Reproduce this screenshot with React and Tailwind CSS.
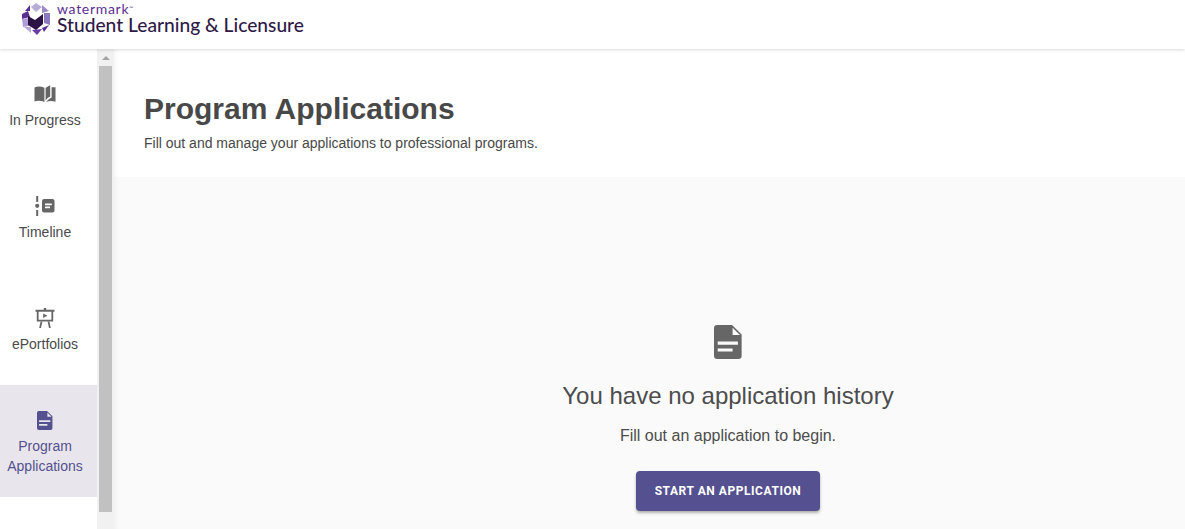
const sans = "font-['Liberation_Sans',Arial,sans-serif]";

function Logo() {
  return (
    <svg width="28" height="32" viewBox="0 0 28 32" className="shrink-0">
      <polygon points="14,0 20,4 14,9 9,4" fill="#b8acd9" />
      <polygon points="8,2 8,8 3,8" fill="#5b2f91" />
      <polygon points="20,2 27,8 20,10" fill="#9b8cc9" />
      <polygon points="0,11 6,8 8,14 0,16" fill="#5b2f91" />
      <polygon points="0,16 7,15 7,23 1,24" fill="#b09dd6" />
      <polygon points="22,10 28,10 28,22 22,20" fill="#8a79bd" />
      <polygon points="2,24 9,24 9,30" fill="#b8a8dc" />
      <polygon points="20,25 27,22 22,29" fill="#5b2f91" />
      <polygon points="10,27 20,26 15,32" fill="#6a3aa5" />
      <polygon points="6,13 13,17 21,11 21,21 14,27 6,22" fill="#2a1245" />
      <polygon points="13,10 19,9 13,16" fill="#ffffff" />
    </svg>
  );
}

function BookIcon() {
  return (
    <svg width="22" height="18" viewBox="0 0 22 18" fill="#666666">
      <path d="M0.5 2.5C3 1 7 1 10.4 2.8V17C7 15.4 3 15.4 0.5 16.6Z" />
      <path d="M11.6 3C12.8 2 14 1.2 16.2 0.2V11.5C14.4 12.4 13 13.6 11.6 15.4Z" />
      <path d="M17.6 2.2H21.5V16.8C18.5 15.6 15 15.6 12 17C14 15 16 13.6 17.6 12.6Z" />
    </svg>
  );
}

function TimelineIcon() {
  return (
    <svg width="20" height="20" viewBox="0 0 20 20" fill="#666666">
      <rect x="1.2" y="0" width="2" height="6" />
      <circle cx="2.2" cy="9.8" r="2.1" />
      <rect x="1.2" y="14" width="2" height="6" />
      <path fillRule="evenodd" d="M9 3H17.5A2 2 0 0 1 19.5 5V14.5A2 2 0 0 1 17.5 16.5H9A2 2 0 0 1 7 14.5V5A2 2 0 0 1 9 3ZM10 7.5V9.2H16.8V7.5ZM10 10.6V12.3H15V10.6Z" />
    </svg>
  );
}

function PortfolioIcon() {
  return (
    <svg width="20" height="20" viewBox="0 0 20 20" fill="#666666">
      <path fillRule="evenodd" d="M8.8 0H11.2V1.8H19.5V3.8H18.2V13.5H1.8V3.8H0.5V1.8H8.8ZM3.6 3.8V11.7H16.4V3.8Z" />
      <path d="M8.2 5.6L12.4 7.8L8.2 10Z" />
      <path d="M5.6 13.5H7.4L6 20H4.2Z" />
      <path d="M12.6 13.5H14.4L15.8 20H14Z" />
    </svg>
  );
}

function DocIcon({ color, size }) {
  return (
    <svg width={size * 0.8125} height={size} viewBox="0 0 26 32" fill={color}>
      <path
        fillRule="evenodd"
        d="M3 0H17L26 9V29A3 3 0 0 1 23 32H3A3 3 0 0 1 0 29V3A3 3 0 0 1 3 0ZM17.5 2.5V9.5H24.5ZM3.5 15.5V18.5H22.5V15.5ZM3.5 22V25H17.5V22Z"
      />
    </svg>
  );
}

function NavItem({ icon, active, children }) {
  return (
    <div
      className={`h-[112px] pt-[4px] pr-[7px] flex flex-col items-center justify-center text-center text-[14px] leading-[20px] ${
        active ? "bg-[#e8e6ec] text-[#55508f]" : "text-[#4a4a4a]"
      }`}
    >
      <div className="h-[20px] flex items-center justify-center mb-[6px]">{icon}</div>
      {children}
    </div>
  );
}

export default function App() {
  return (
    <div className={`${sans} w-[1185px] h-[529px] overflow-hidden bg-white flex flex-col`}>
      <header className="relative z-10 h-[49px] shrink-0 bg-white shadow-[0_1px_3px_rgba(0,0,0,0.15)] flex items-start pl-[22px] pt-[3px] gap-[7px]">
        <Logo />
        <div className="flex flex-col font-['Lato',sans-serif] text-[#2e1a47]">
          <div className="text-[14px] leading-[9px] pt-[1px] text-[#5b2f91] tracking-[0.7px]">
            watermark<span className="text-[5px] align-top">™</span>
          </div>
          <div className="text-[19.2px] leading-[22px] font-medium mt-[1px]">Student Learning &amp; Licensure</div>
        </div>
      </header>

      <div className="flex flex-1 min-h-0">
        <nav className="w-[97px] shrink-0 bg-white">
          <NavItem icon={<BookIcon />}>In Progress</NavItem>
          <NavItem icon={<TimelineIcon />}>Timeline</NavItem>
          <NavItem icon={<PortfolioIcon />}>ePortfolios</NavItem>
          <NavItem active icon={<DocIcon color="#55508f" size={19} />}>
            Program
            <br />
            Applications
          </NavItem>
        </nav>

        <div className="w-[17px] shrink-0 bg-[#f1f1f1] flex flex-col items-center">
          <div className="h-[17px] flex items-center justify-center">
            <div className="w-0 h-0 border-x-[4px] border-x-transparent border-b-[4px] border-b-[#a3a3a3]" />
          </div>
          <div className="w-[13px] h-[446px] bg-[#c1c1c1]" />
        </div>

        <main className="flex-1 min-w-0 flex flex-col bg-[#fafafa] shadow-[inset_5px_0_4px_-3px_rgba(0,0,0,0.04)]">
          <section className="h-[128px] shrink-0 bg-white shadow-[inset_5px_0_4px_-3px_rgba(0,0,0,0.04)] pl-[30px] pt-[42px] text-[#484848]">
            <h1 className="text-[30px] leading-[36px] font-bold">Program Applications</h1>
            <p className="text-[14px] leading-[20px] mt-[6px]">
              Fill out and manage your applications to professional programs.
            </p>
          </section>
          <section className="flex-1 flex flex-col items-center pl-[157px] pt-[148px] text-[#4d4d4d]">
            <DocIcon color="#666666" size={34} />
            <h2 className="text-[24px] leading-[32px] mt-[21px]">You have no application history</h2>
            <p className="text-[16px] leading-[24px] mt-[12px]">Fill out an application to begin.</p>
            <button className="mt-[23px] w-[184px] h-[40px] shrink-0 rounded-[4px] bg-[#55508f] text-white text-[12px] font-bold font-['Roboto',sans-serif] tracking-[0.55px] shadow-[0_2px_3px_rgba(0,0,0,0.3)]">
              START AN APPLICATION
            </button>
          </section>
        </main>
      </div>
    </div>
  );
}
